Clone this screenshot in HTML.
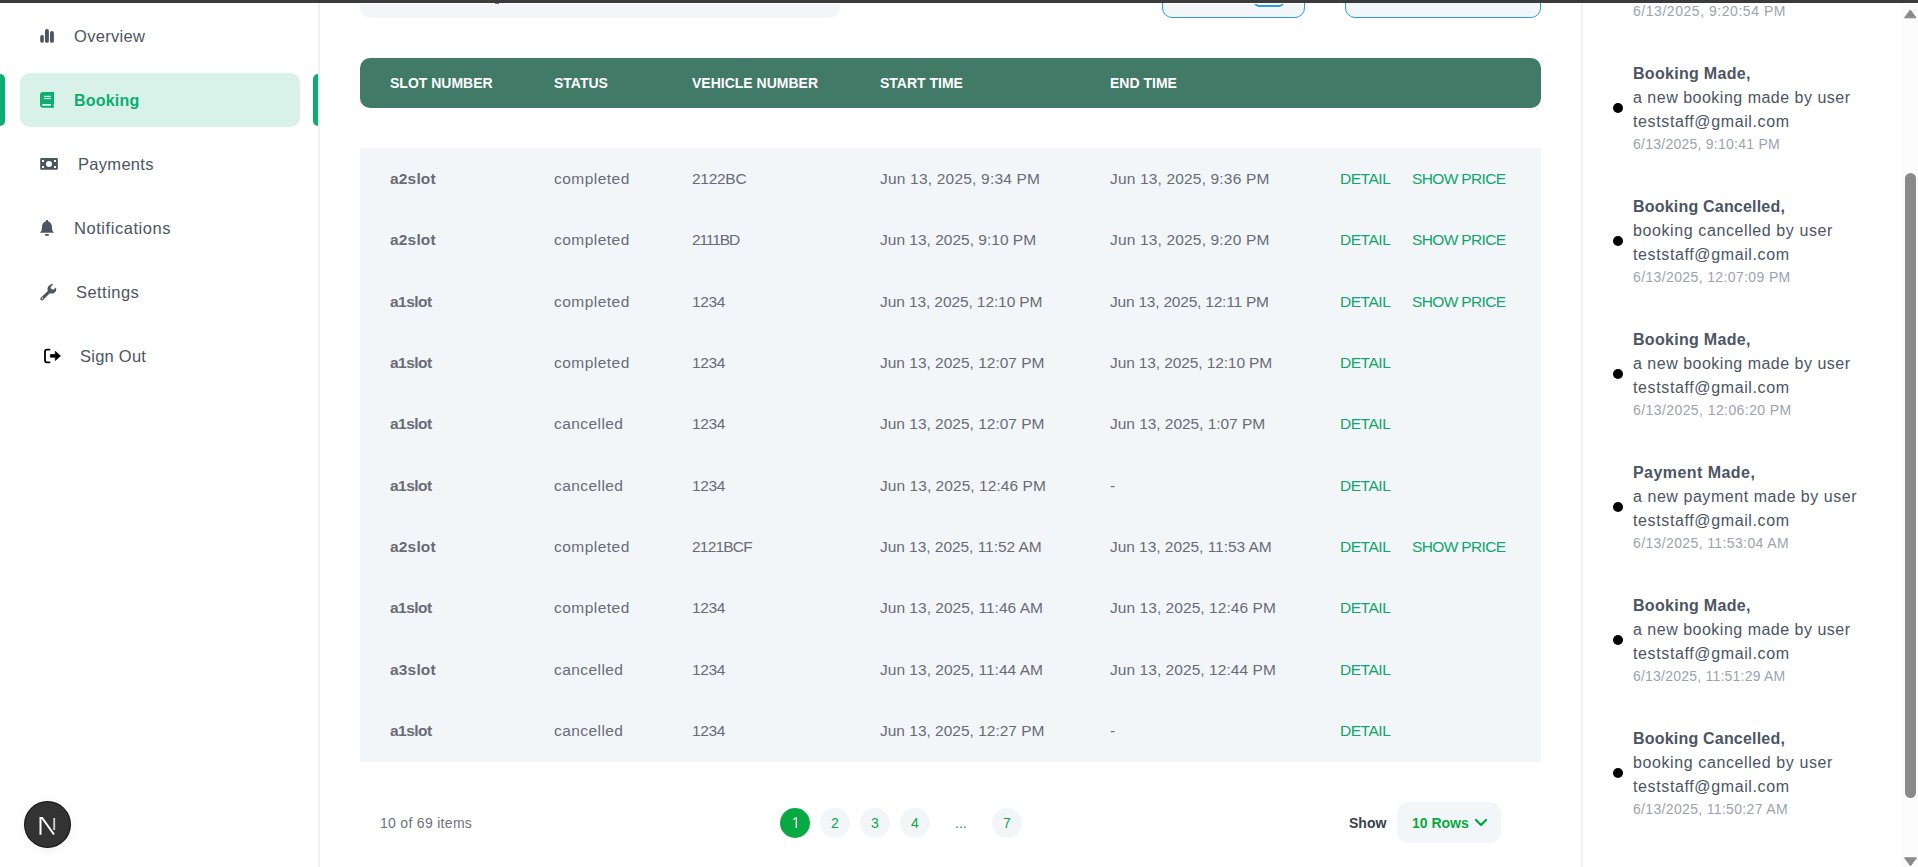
<!DOCTYPE html>
<html><head><meta charset="utf-8"><title>Booking</title>
<style>
html,body{margin:0;padding:0;width:1918px;height:867px;overflow:hidden;background:#fff;font-family:"Liberation Sans", sans-serif;position:relative}
.t{position:absolute;white-space:nowrap;line-height:1}
</style></head><body>
<div style="position:absolute;left:0;top:0;width:1918px;height:3px;background:#3b3b3b;z-index:10"></div>
<div style="position:absolute;left:318px;top:0;width:2px;height:867px;background:#f0f1f5"></div>
<div style="position:absolute;left:0;top:74px;width:5px;height:52px;background:#0cad71;border-radius:0 5px 5px 0"></div>
<div style="position:absolute;left:20px;top:73px;width:280px;height:54px;background:#d9f2e9;border-radius:10px"></div>
<div style="position:absolute;left:313px;top:74px;width:5px;height:52px;background:#0cad71;border-radius:5px 0 0 5px"></div>
<div class="t" style="left:74px;top:28px;font-size:16.5px;color:#4b5563;font-weight:normal;letter-spacing:0.3px;">Overview</div>
<div class="t" style="left:74px;top:93px;font-size:16px;color:#0cad71;font-weight:bold;letter-spacing:0.2px;">Booking</div>
<div class="t" style="left:78px;top:156px;font-size:16.5px;color:#4b5563;font-weight:normal;letter-spacing:0.3px;">Payments</div>
<div class="t" style="left:74px;top:220px;font-size:16.5px;color:#4b5563;font-weight:normal;letter-spacing:0.55px;">Notifications</div>
<div class="t" style="left:76px;top:284px;font-size:16.5px;color:#4b5563;font-weight:normal;letter-spacing:0.45px;">Settings</div>
<div class="t" style="left:80px;top:348px;font-size:16.5px;color:#4b5563;font-weight:normal;letter-spacing:0.25px;">Sign Out</div>
<svg style="position:absolute;left:0;top:0" width="320" height="400" viewBox="0 0 320 400">
<g fill="#4b5563">
 <rect x="40.2" y="35" width="3.6" height="7.8" rx="1.8"/>
 <rect x="45" y="29" width="3.9" height="13.8" rx="1.9"/>
 <rect x="50" y="31" width="3.9" height="11.8" rx="1.9"/>
</g>
<g>
 <path d="M43 92 H54 V104 L53.5 104.8 V105.8 L54 106.5 V107.8 H43 A3 3 0 0 1 40 104.8 V95 A3 3 0 0 1 43 92 Z" fill="#0cad71"/>
 <rect x="44" y="95.8" width="7" height="1.2" fill="#d9f2e9"/>
 <rect x="44" y="97.9" width="7" height="1.2" fill="#d9f2e9"/>
 <rect x="42.3" y="104" width="8.7" height="1.8" fill="#d9f2e9"/>
</g>
<g fill="#4b5563">
 <path fill-rule="evenodd" d="M41.5 158 H56.6 A1.3 1.3 0 0 1 57.9 159.3 V168.4 A1.3 1.3 0 0 1 56.6 169.7 H41.5 A1.3 1.3 0 0 1 40.2 168.4 V159.3 A1.3 1.3 0 0 1 41.5 158 Z
  M42 160 V162 H44 V160 Z M54 160 V162 H56 V160 Z M42 166 V168 H44 V166 Z M54 166 V168 H56 V166 Z
  M49 161 A3 3 0 1 0 49 167 A3 3 0 1 0 49 161 Z"/>
</g>
<g fill="#4b5563">
 <path d="M46 220 H48 V221.3 C50.5 222 51.8 224 51.9 226.5 L52.3 230.5 L53.9 232.7 H40 L41.6 230.5 L42 226.5 C42.2 224 43.5 222 46 221.3 Z"/>
 <rect x="45" y="234" width="4" height="1.8" rx="0.9"/>
</g>
<g fill="#4b5563">
 <path d="M52.9 284 C50 284 47.5 286.3 47.5 289.3 C47.5 289.9 47.6 290.5 47.8 291 L40.8 297.8 C40.2 298.4 40.2 299.4 40.8 300 C41.4 300.6 42.4 300.6 43 300 L49.8 293.3 C50.4 293.5 51 293.6 51.7 293.6 C54.7 293.6 57 291.1 56 287.5 L53.7 289.6 L51.3 289.2 L50.6 286.8 L52.9 284.7 Z"/>
 <circle cx="42.5" cy="298.3" r="0.7" fill="#fff"/>
</g>
<g>
 <path d="M49.5 349.6 H47 A2 2 0 0 0 45 351.6 V360.3 A2 2 0 0 0 47 362.3 H49.5" fill="none" stroke="#000" stroke-width="1.8" stroke-linecap="round"/>
 <path d="M50.4 354.5 H55.3 V351.3 L60.5 355.9 L55.3 360.5 V357.2 H50.4 Z" fill="#000" stroke="#000" stroke-width="0.7" stroke-linejoin="round"/>
</g>
</svg>
<div style="position:absolute;left:25px;top:802px;width:45px;height:45px;border-radius:50%;background:#333;box-shadow:0 0 0 1px #111, 0 2px 14px rgba(0,0,0,0.07)"></div>
<svg style="position:absolute;left:24px;top:801px" width="47" height="47" viewBox="0 0 47 47"><path d="M16.5 33.8 V17 H18.2 L30 33.5" fill="none" stroke="#fff" stroke-width="2"/><path d="M30.2 17 V29" stroke="#ccc" stroke-width="1.9"/></svg>
<div style="position:absolute;left:360px;top:4px;width:480px;height:14px;background:#f3f6f9;border-radius:0 0 10px 10px"></div>
<div style="position:absolute;left:495px;top:3px;width:4px;height:1px;background:#777"></div>
<div style="position:absolute;left:1162px;top:-30px;width:141px;height:46px;background:#f3f6f9;border:1px solid #2d9cdb;border-radius:10px"></div>
<div style="position:absolute;left:1254px;top:-20px;width:26px;height:23px;border:2px solid #2d9cdb;border-radius:5px"></div>
<div style="position:absolute;left:1163px;top:3px;width:141px;height:1px;background:#fff"></div>
<div style="position:absolute;left:1346px;top:3px;width:194px;height:1px;background:#fff"></div>
<div style="position:absolute;left:1345px;top:-30px;width:194px;height:46px;background:#f3f6f9;border:1px solid #2d9cdb;border-radius:10px"></div>
<div style="position:absolute;left:360px;top:58px;width:1181px;height:50px;background:#417a66;border-radius:10px"></div>
<div class="t" style="left:390px;top:76px;font-size:14px;color:#fff;font-weight:bold;letter-spacing:0px;">SLOT NUMBER</div>
<div class="t" style="left:554px;top:76px;font-size:14px;color:#fff;font-weight:bold;letter-spacing:0px;">STATUS</div>
<div class="t" style="left:692px;top:76px;font-size:14px;color:#fff;font-weight:bold;letter-spacing:0px;">VEHICLE NUMBER</div>
<div class="t" style="left:880px;top:76px;font-size:14px;color:#fff;font-weight:bold;letter-spacing:0px;">START TIME</div>
<div class="t" style="left:1110px;top:76px;font-size:14px;color:#fff;font-weight:bold;letter-spacing:0px;">END TIME</div>
<div style="position:absolute;left:360px;top:148px;width:1181px;height:614px;background:#f3f6f9"></div>
<div class="t" style="left:390px;top:171px;font-size:15.5px;color:#686c75;font-weight:bold;letter-spacing:0.173px;">a2slot</div>
<div class="t" style="left:554px;top:171px;font-size:15.5px;color:#686c75;font-weight:normal;letter-spacing:0.476px;">completed</div>
<div class="t" style="left:692px;top:171px;font-size:15.5px;color:#686c75;font-weight:normal;letter-spacing:-0.284px;">2122BC</div>
<div class="t" style="left:880px;top:171px;font-size:15.5px;color:#686c75;font-weight:normal;letter-spacing:0.202px;">Jun 13, 2025, 9:34 PM</div>
<div class="t" style="left:1110px;top:171px;font-size:15.5px;color:#686c75;font-weight:normal;letter-spacing:0.167px;">Jun 13, 2025, 9:36 PM</div>
<div class="t" style="left:1340px;top:171px;font-size:15.5px;color:#10a56c;font-weight:normal;letter-spacing:-0.459px;">DETAIL</div>
<div class="t" style="left:1412px;top:171px;font-size:15.5px;color:#10a56c;font-weight:normal;letter-spacing:-0.64px;">SHOW PRICE</div>
<div class="t" style="left:390px;top:232px;font-size:15.5px;color:#686c75;font-weight:bold;letter-spacing:0.173px;">a2slot</div>
<div class="t" style="left:554px;top:232px;font-size:15.5px;color:#686c75;font-weight:normal;letter-spacing:0.476px;">completed</div>
<div class="t" style="left:692px;top:232px;font-size:15.5px;color:#686c75;font-weight:normal;letter-spacing:-1.124px;">2111BD</div>
<div class="t" style="left:880px;top:232px;font-size:15.5px;color:#686c75;font-weight:normal;letter-spacing:0.007px;">Jun 13, 2025, 9:10 PM</div>
<div class="t" style="left:1110px;top:232px;font-size:15.5px;color:#686c75;font-weight:normal;letter-spacing:0.167px;">Jun 13, 2025, 9:20 PM</div>
<div class="t" style="left:1340px;top:232px;font-size:15.5px;color:#10a56c;font-weight:normal;letter-spacing:-0.459px;">DETAIL</div>
<div class="t" style="left:1412px;top:232px;font-size:15.5px;color:#10a56c;font-weight:normal;letter-spacing:-0.64px;">SHOW PRICE</div>
<div class="t" style="left:390px;top:294px;font-size:15.5px;color:#686c75;font-weight:bold;letter-spacing:-0.527px;">a1slot</div>
<div class="t" style="left:554px;top:294px;font-size:15.5px;color:#686c75;font-weight:normal;letter-spacing:0.476px;">completed</div>
<div class="t" style="left:692px;top:294px;font-size:15.5px;color:#686c75;font-weight:normal;letter-spacing:-0.387px;">1234</div>
<div class="t" style="left:880px;top:294px;font-size:15.5px;color:#686c75;font-weight:normal;letter-spacing:-0.099px;">Jun 13, 2025, 12:10 PM</div>
<div class="t" style="left:1110px;top:294px;font-size:15.5px;color:#686c75;font-weight:normal;letter-spacing:-0.211px;">Jun 13, 2025, 12:11 PM</div>
<div class="t" style="left:1340px;top:294px;font-size:15.5px;color:#10a56c;font-weight:normal;letter-spacing:-0.459px;">DETAIL</div>
<div class="t" style="left:1412px;top:294px;font-size:15.5px;color:#10a56c;font-weight:normal;letter-spacing:-0.64px;">SHOW PRICE</div>
<div class="t" style="left:390px;top:355px;font-size:15.5px;color:#686c75;font-weight:bold;letter-spacing:-0.527px;">a1slot</div>
<div class="t" style="left:554px;top:355px;font-size:15.5px;color:#686c75;font-weight:normal;letter-spacing:0.476px;">completed</div>
<div class="t" style="left:692px;top:355px;font-size:15.5px;color:#686c75;font-weight:normal;letter-spacing:-0.387px;">1234</div>
<div class="t" style="left:880px;top:355px;font-size:15.5px;color:#686c75;font-weight:normal;letter-spacing:-0.004px;">Jun 13, 2025, 12:07 PM</div>
<div class="t" style="left:1110px;top:355px;font-size:15.5px;color:#686c75;font-weight:normal;letter-spacing:-0.113px;">Jun 13, 2025, 12:10 PM</div>
<div class="t" style="left:1340px;top:355px;font-size:15.5px;color:#10a56c;font-weight:normal;letter-spacing:-0.459px;">DETAIL</div>
<div class="t" style="left:390px;top:416px;font-size:15.5px;color:#686c75;font-weight:bold;letter-spacing:-0.527px;">a1slot</div>
<div class="t" style="left:554px;top:416px;font-size:15.5px;color:#686c75;font-weight:normal;letter-spacing:0.429px;">cancelled</div>
<div class="t" style="left:692px;top:416px;font-size:15.5px;color:#686c75;font-weight:normal;letter-spacing:-0.387px;">1234</div>
<div class="t" style="left:880px;top:416px;font-size:15.5px;color:#686c75;font-weight:normal;letter-spacing:-0.004px;">Jun 13, 2025, 12:07 PM</div>
<div class="t" style="left:1110px;top:416px;font-size:15.5px;color:#686c75;font-weight:normal;letter-spacing:-0.043px;">Jun 13, 2025, 1:07 PM</div>
<div class="t" style="left:1340px;top:416px;font-size:15.5px;color:#10a56c;font-weight:normal;letter-spacing:-0.459px;">DETAIL</div>
<div class="t" style="left:390px;top:478px;font-size:15.5px;color:#686c75;font-weight:bold;letter-spacing:-0.527px;">a1slot</div>
<div class="t" style="left:554px;top:478px;font-size:15.5px;color:#686c75;font-weight:normal;letter-spacing:0.429px;">cancelled</div>
<div class="t" style="left:692px;top:478px;font-size:15.5px;color:#686c75;font-weight:normal;letter-spacing:-0.387px;">1234</div>
<div class="t" style="left:880px;top:478px;font-size:15.5px;color:#686c75;font-weight:normal;letter-spacing:0.058px;">Jun 13, 2025, 12:46 PM</div>
<div class="t" style="left:1110px;top:478px;font-size:15.5px;color:#686c75;font-weight:normal;letter-spacing:0px;">-</div>
<div class="t" style="left:1340px;top:478px;font-size:15.5px;color:#10a56c;font-weight:normal;letter-spacing:-0.459px;">DETAIL</div>
<div class="t" style="left:390px;top:539px;font-size:15.5px;color:#686c75;font-weight:bold;letter-spacing:0.173px;">a2slot</div>
<div class="t" style="left:554px;top:539px;font-size:15.5px;color:#686c75;font-weight:normal;letter-spacing:0.476px;">completed</div>
<div class="t" style="left:692px;top:539px;font-size:15.5px;color:#686c75;font-weight:normal;letter-spacing:-0.802px;">2121BCF</div>
<div class="t" style="left:880px;top:539px;font-size:15.5px;color:#686c75;font-weight:normal;letter-spacing:-0.044px;">Jun 13, 2025, 11:52 AM</div>
<div class="t" style="left:1110px;top:539px;font-size:15.5px;color:#686c75;font-weight:normal;letter-spacing:-0.044px;">Jun 13, 2025, 11:53 AM</div>
<div class="t" style="left:1340px;top:539px;font-size:15.5px;color:#10a56c;font-weight:normal;letter-spacing:-0.459px;">DETAIL</div>
<div class="t" style="left:1412px;top:539px;font-size:15.5px;color:#10a56c;font-weight:normal;letter-spacing:-0.64px;">SHOW PRICE</div>
<div class="t" style="left:390px;top:600px;font-size:15.5px;color:#686c75;font-weight:bold;letter-spacing:-0.527px;">a1slot</div>
<div class="t" style="left:554px;top:600px;font-size:15.5px;color:#686c75;font-weight:normal;letter-spacing:0.476px;">completed</div>
<div class="t" style="left:692px;top:600px;font-size:15.5px;color:#686c75;font-weight:normal;letter-spacing:-0.387px;">1234</div>
<div class="t" style="left:880px;top:600px;font-size:15.5px;color:#686c75;font-weight:normal;letter-spacing:0.018px;">Jun 13, 2025, 11:46 AM</div>
<div class="t" style="left:1110px;top:600px;font-size:15.5px;color:#686c75;font-weight:normal;letter-spacing:0.058px;">Jun 13, 2025, 12:46 PM</div>
<div class="t" style="left:1340px;top:600px;font-size:15.5px;color:#10a56c;font-weight:normal;letter-spacing:-0.459px;">DETAIL</div>
<div class="t" style="left:390px;top:662px;font-size:15.5px;color:#686c75;font-weight:bold;letter-spacing:0.173px;">a3slot</div>
<div class="t" style="left:554px;top:662px;font-size:15.5px;color:#686c75;font-weight:normal;letter-spacing:0.429px;">cancelled</div>
<div class="t" style="left:692px;top:662px;font-size:15.5px;color:#686c75;font-weight:normal;letter-spacing:-0.387px;">1234</div>
<div class="t" style="left:880px;top:662px;font-size:15.5px;color:#686c75;font-weight:normal;letter-spacing:0.018px;">Jun 13, 2025, 11:44 AM</div>
<div class="t" style="left:1110px;top:662px;font-size:15.5px;color:#686c75;font-weight:normal;letter-spacing:0.058px;">Jun 13, 2025, 12:44 PM</div>
<div class="t" style="left:1340px;top:662px;font-size:15.5px;color:#10a56c;font-weight:normal;letter-spacing:-0.459px;">DETAIL</div>
<div class="t" style="left:390px;top:723px;font-size:15.5px;color:#686c75;font-weight:bold;letter-spacing:-0.527px;">a1slot</div>
<div class="t" style="left:554px;top:723px;font-size:15.5px;color:#686c75;font-weight:normal;letter-spacing:0.429px;">cancelled</div>
<div class="t" style="left:692px;top:723px;font-size:15.5px;color:#686c75;font-weight:normal;letter-spacing:-0.387px;">1234</div>
<div class="t" style="left:880px;top:723px;font-size:15.5px;color:#686c75;font-weight:normal;letter-spacing:-0.004px;">Jun 13, 2025, 12:27 PM</div>
<div class="t" style="left:1110px;top:723px;font-size:15.5px;color:#686c75;font-weight:normal;letter-spacing:0px;">-</div>
<div class="t" style="left:1340px;top:723px;font-size:15.5px;color:#10a56c;font-weight:normal;letter-spacing:-0.459px;">DETAIL</div>
<div class="t" style="left:380px;top:816px;font-size:14px;color:#6b7280;font-weight:normal;letter-spacing:0.3px;">10 of 69 items</div>
<div style="position:absolute;left:780px;top:808px;width:30px;height:30px;border-radius:50%;background:#08a843"></div>
<svg style="position:absolute;left:780px;top:808px" width="30" height="30" viewBox="780 808 30 30"><path d="M796.3 828 V817.9 H795.6 L793.4 819.6" fill="none" stroke="#fff" stroke-width="1.3" stroke-linejoin="round"/></svg>
<div style="position:absolute;left:820px;top:808px;width:30px;height:30px;border-radius:50%;background:#f3f6f9;color:#08a843;font-size:14px;line-height:30px;text-align:center">2</div>
<div style="position:absolute;left:860px;top:808px;width:30px;height:30px;border-radius:50%;background:#f3f6f9;color:#08a843;font-size:14px;line-height:30px;text-align:center">3</div>
<div style="position:absolute;left:900px;top:808px;width:30px;height:30px;border-radius:50%;background:#f3f6f9;color:#08a843;font-size:14px;line-height:30px;text-align:center">4</div>
<div style="position:absolute;left:992px;top:808px;width:30px;height:30px;border-radius:50%;background:#f3f6f9;color:#08a843;font-size:14px;line-height:30px;text-align:center">7</div>
<div class="t" style="left:955px;top:816px;font-size:14px;color:#08a843;font-weight:normal;letter-spacing:0px;">...</div>
<div class="t" style="left:1349px;top:816px;font-size:14px;color:#374151;font-weight:bold;letter-spacing:0px;">Show</div>
<div style="position:absolute;left:1397px;top:802px;width:104px;height:41px;background:#f3f6f9;border-radius:12px"></div>
<div class="t" style="left:1412px;top:816px;font-size:14px;color:#08a843;font-weight:bold;letter-spacing:0px;">10 Rows</div>
<svg style="position:absolute;left:1474px;top:817px" width="14" height="11" viewBox="0 0 14 11"><path d="M2 3 L7 8 L12 3" fill="none" stroke="#08a843" stroke-width="2.4" stroke-linecap="round" stroke-linejoin="round"/></svg>
<div style="position:absolute;left:1581px;top:0;width:2px;height:867px;background:#f1f2f5"></div>
<div class="t" style="left:1633px;top:4px;font-size:14px;color:#9ca3af;font-weight:normal;letter-spacing:0.54px;">6/13/2025, 9:20:54 PM</div>
<div style="position:absolute;left:1613px;top:103.0px;width:10px;height:10px;border-radius:50%;background:#000"></div>
<div class="t" style="left:1633px;top:66px;font-size:16px;color:#4b5563;font-weight:bold;letter-spacing:0.3px;">Booking Made,</div>
<div class="t" style="left:1633px;top:90px;font-size:16px;color:#4b5563;font-weight:normal;letter-spacing:0.5px;">a new booking made by user</div>
<div class="t" style="left:1633px;top:114px;font-size:16px;color:#4b5563;font-weight:normal;letter-spacing:0.62px;">teststaff@gmail.com</div>
<div class="t" style="left:1633px;top:137px;font-size:14px;color:#9ca3af;font-weight:normal;letter-spacing:0.25px;">6/13/2025, 9:10:41 PM</div>
<div style="position:absolute;left:1613px;top:236.0px;width:10px;height:10px;border-radius:50%;background:#000"></div>
<div class="t" style="left:1633px;top:199px;font-size:16px;color:#4b5563;font-weight:bold;letter-spacing:0.2px;">Booking Cancelled,</div>
<div class="t" style="left:1633px;top:223px;font-size:16px;color:#4b5563;font-weight:normal;letter-spacing:0.6px;">booking cancelled by user</div>
<div class="t" style="left:1633px;top:247px;font-size:16px;color:#4b5563;font-weight:normal;letter-spacing:0.62px;">teststaff@gmail.com</div>
<div class="t" style="left:1633px;top:270px;font-size:14px;color:#9ca3af;font-weight:normal;letter-spacing:0.372px;">6/13/2025, 12:07:09 PM</div>
<div style="position:absolute;left:1613px;top:369.0px;width:10px;height:10px;border-radius:50%;background:#000"></div>
<div class="t" style="left:1633px;top:332px;font-size:16px;color:#4b5563;font-weight:bold;letter-spacing:0.3px;">Booking Made,</div>
<div class="t" style="left:1633px;top:356px;font-size:16px;color:#4b5563;font-weight:normal;letter-spacing:0.5px;">a new booking made by user</div>
<div class="t" style="left:1633px;top:380px;font-size:16px;color:#4b5563;font-weight:normal;letter-spacing:0.62px;">teststaff@gmail.com</div>
<div class="t" style="left:1633px;top:403px;font-size:14px;color:#9ca3af;font-weight:normal;letter-spacing:0.42px;">6/13/2025, 12:06:20 PM</div>
<div style="position:absolute;left:1613px;top:502.0px;width:10px;height:10px;border-radius:50%;background:#000"></div>
<div class="t" style="left:1633px;top:465px;font-size:16px;color:#4b5563;font-weight:bold;letter-spacing:0.45px;">Payment Made,</div>
<div class="t" style="left:1633px;top:489px;font-size:16px;color:#4b5563;font-weight:normal;letter-spacing:0.55px;">a new payment made by user</div>
<div class="t" style="left:1633px;top:513px;font-size:16px;color:#4b5563;font-weight:normal;letter-spacing:0.62px;">teststaff@gmail.com</div>
<div class="t" style="left:1633px;top:536px;font-size:14px;color:#9ca3af;font-weight:normal;letter-spacing:0.379px;">6/13/2025, 11:53:04 AM</div>
<div style="position:absolute;left:1613px;top:635.0px;width:10px;height:10px;border-radius:50%;background:#000"></div>
<div class="t" style="left:1633px;top:598px;font-size:16px;color:#4b5563;font-weight:bold;letter-spacing:0.3px;">Booking Made,</div>
<div class="t" style="left:1633px;top:622px;font-size:16px;color:#4b5563;font-weight:normal;letter-spacing:0.5px;">a new booking made by user</div>
<div class="t" style="left:1633px;top:646px;font-size:16px;color:#4b5563;font-weight:normal;letter-spacing:0.62px;">teststaff@gmail.com</div>
<div class="t" style="left:1633px;top:669px;font-size:14px;color:#9ca3af;font-weight:normal;letter-spacing:0.217px;">6/13/2025, 11:51:29 AM</div>
<div style="position:absolute;left:1613px;top:768.0px;width:10px;height:10px;border-radius:50%;background:#000"></div>
<div class="t" style="left:1633px;top:731px;font-size:16px;color:#4b5563;font-weight:bold;letter-spacing:0.2px;">Booking Cancelled,</div>
<div class="t" style="left:1633px;top:755px;font-size:16px;color:#4b5563;font-weight:normal;letter-spacing:0.6px;">booking cancelled by user</div>
<div class="t" style="left:1633px;top:779px;font-size:16px;color:#4b5563;font-weight:normal;letter-spacing:0.62px;">teststaff@gmail.com</div>
<div class="t" style="left:1633px;top:802px;font-size:14px;color:#9ca3af;font-weight:normal;letter-spacing:0.331px;">6/13/2025, 11:50:27 AM</div>
<div style="position:absolute;left:1901px;top:3px;width:17px;height:864px;background:#fbfbfb"></div>
<svg style="position:absolute;left:1900px;top:0" width="18" height="867" viewBox="1900 0 18 867"><path d="M1904.5 17.8 L1910.3 10 L1916 17.8 Z" fill="#8a8a8a" stroke="#8a8a8a" stroke-width="1" stroke-linejoin="round"/><path d="M1904.5 857.8 L1910.5 865.8 L1916.5 857.8 Z" fill="#8a8a8a" stroke="#8a8a8a" stroke-width="1" stroke-linejoin="round"/></svg>
<div style="position:absolute;left:1905px;top:173px;width:11px;height:625px;background:#8a8a8a;border-radius:6px"></div>

</body></html>
